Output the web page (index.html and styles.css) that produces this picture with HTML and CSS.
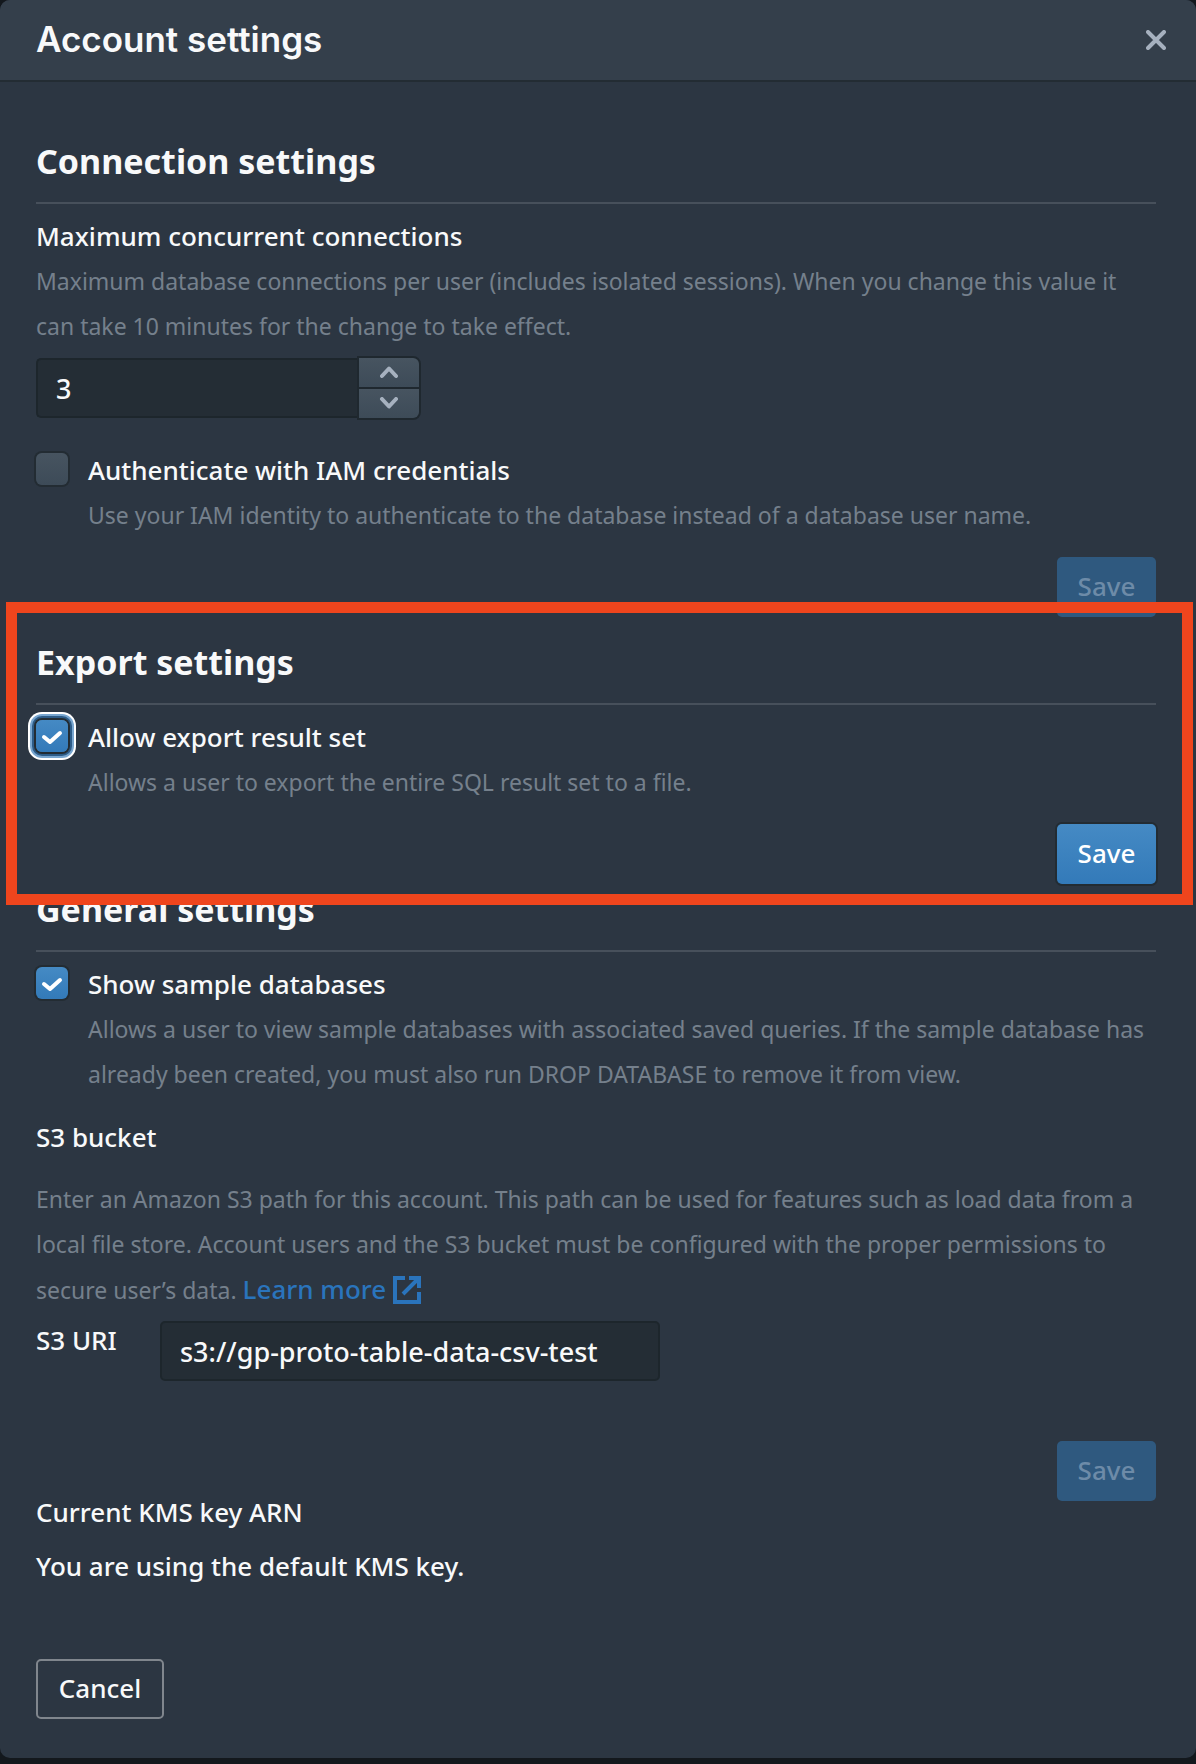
FILE: index.html
```html
<!DOCTYPE html>
<html lang="en">
<head>
<meta charset="utf-8">
<meta name="viewport" content="width=device-width, initial-scale=1">
<title>Account settings</title>
<link rel="stylesheet" href="styles.css">
</head>
<body>
<div class="modal" role="dialog" aria-labelledby="modal-title">
  <header class="modal-header">
    <h1 class="modal-title" id="modal-title">Account settings</h1>
    <button class="close" type="button" aria-label="Close">
      <svg width="20" height="20" viewBox="0 0 20 20" fill="none" stroke="currentColor" stroke-width="4" stroke-linecap="round"><path d="M2 2 18 18M18 2 2 18"/></svg>
    </button>
  </header>
  <main class="modal-body">
    <section class="section">
      <h2 class="section-title">Connection settings</h2>
      <label class="label" for="max-connections">Maximum concurrent connections</label>
      <p class="hint">Maximum database connections per user (includes isolated sessions). When you change this value it can take 10 minutes for the change to take effect.</p>
      <div class="stepper">
        <input class="field stepper-field" id="max-connections" type="number" value="3">
        <div class="stepper-buttons">
          <button class="step" type="button" aria-label="Increase"><svg width="20" height="14" viewBox="0 0 20 14"><path d="M3 10 10 2.500 17 10"/></svg></button>
          <button class="step" type="button" aria-label="Decrease"><svg width="20" height="14" viewBox="0 0 20 14"><path d="M3 2 10 9.500 17 2"/></svg></button>
        </div>
      </div>
      <div class="check-row check-row-spaced">
        <span class="check"><input class="check-box" type="checkbox" id="iam"><svg class="tick" viewBox="0 0 32 32"><path d="M8 17 14 22 24 13"/></svg></span>
        <label class="label" for="iam">Authenticate with IAM credentials</label>
        <p class="hint">Use your IAM identity to authenticate to the database instead of a database user name.</p>
      </div>
      <div class="actions"><button class="button primary" type="button" disabled>Save</button></div>
    </section>

    <section class="section export">
      <h2 class="section-title">Export settings</h2>
      <div class="check-row">
        <span class="check focused"><input class="check-box" type="checkbox" id="export" checked><svg class="tick" viewBox="0 0 32 32"><path d="M8 17 14 22 24 13"/></svg></span>
        <label class="label" for="export">Allow export result set</label>
        <p class="hint">Allows a user to export the entire SQL result set to a file.</p>
      </div>
      <div class="actions"><button class="button primary" type="button">Save</button></div>
    </section>

    <section class="section general">
      <h2 class="section-title">General settings</h2>
      <div class="check-row">
        <span class="check"><input class="check-box" type="checkbox" id="samples" checked><svg class="tick" viewBox="0 0 32 32"><path d="M8 17 14 22 24 13"/></svg></span>
        <label class="label" for="samples">Show sample databases</label>
        <p class="hint">Allows a user to view sample databases with associated saved queries. If the sample database has already been created, you must also run DROP DATABASE to remove it from view.</p>
      </div>
      <h3 class="label bucket-title">S3 bucket</h3>
      <p class="hint">Enter an Amazon S3 path for this account. This path can be used for features such as load data from a local file store. Account users and the S3 bucket must be configured with the proper permissions to secure user’s data. <a class="link" href="#">Learn more <svg class="external" width="28" height="28" viewBox="0 0 28 28" fill="none" stroke="currentColor" stroke-width="4"><path d="M12 2H2V26H26V16M16 2H26V12M25 3 10 18"/></svg></a></p>
      <div class="uri-row">
        <label class="label" for="uri">S3 URI</label>
        <input class="field uri-field" id="uri" type="text" value="s3://gp-proto-table-data-csv-test">
      </div>
      <div class="actions actions-spaced"><button class="button primary" type="button" disabled>Save</button></div>
    </section>

    <section class="section kms">
      <h3 class="label">Current KMS key ARN</h3>
      <p class="label">You are using the default KMS key.</p>
    </section>
    <footer class="modal-footer"><button class="button outline" type="button">Cancel</button></footer>
  </main>
</div>
</body>
</html>
```
FILE: styles.css
```css
* { box-sizing: border-box; }

body {
  margin: 0;
  padding-bottom: 5px;
  background: #13181d;
  color: #f8f9fa;
  font: 500 26px/45px "Noto Sans", "Open Sans", sans-serif;
}

h1, h2, h3, p { margin: 0; }

button, input { font: inherit; color: inherit; margin: 0; }

.modal {
  overflow: hidden;
  border-radius: 10px;
  background: #2c3642;
}

.modal-header {
  display: flex;
  align-items: center;
  justify-content: space-between;
  padding: 18px 30px 18px 36px;
  border-bottom: 2px solid #232c33;
  background: #343f4b;
}

.modal-title { margin-bottom: 2px; font: 600 35px/42px Inter, sans-serif; }

.close {
  display: flex;
  padding: 0;
  border: 0;
  background: none;
  color: #a6b1bf;
}

.modal-body { padding: 57px 40px 39px 36px; }

.section { display: flex; flex-direction: column; }

.section-title {
  margin-bottom: 10px;
  padding-bottom: 19px;
  border-bottom: 2px solid #47505b;
  font-size: 34px;
  font-weight: 700;
  line-height: 44px;
}

.label { font-size: 26px; font-weight: 500; line-height: 45px; }

.hint { color: #75808c; font-size: 23px; font-weight: 400; }

.field {
  height: 60px;
  padding: 0 18px;
  border: 2px solid #1d262c;
  border-radius: 5px;
  background: #242d35;
  font-size: 27px;
  font-weight: 500;
  outline: 0;
}

.stepper { display: flex; align-items: center; margin-top: 7px; }

.stepper-field {
  width: 321px;
  border-right: 0;
  border-radius: 5px 0 0 5px;
  appearance: textfield;
}

.stepper-field::-webkit-inner-spin-button { appearance: none; margin: 0; }

.stepper-buttons {
  display: grid;
  grid-template-rows: 1fr 1fr;
  gap: 2px;
  width: 64px;
  height: 64px;
  border: 2px solid #1f282f;
  border-radius: 0 8px 8px 0;
  overflow: hidden;
  background: #1f282f;
}

.step {
  display: grid;
  place-items: center;
  padding: 0;
  border: 0;
  background: linear-gradient(#475460, #3d4b58);
}

.step svg {
  fill: none;
  stroke: #a6b1bf;
  stroke-width: 4;
  stroke-linecap: round;
  stroke-linejoin: round;
}

.check-row {
  display: grid;
  grid-template-columns: 32px 1fr;
  column-gap: 20px;
}

.check-row-spaced { margin-top: 28px; }

.check-row .hint { grid-column: 2; }

.check {
  display: grid;
  width: 32px;
  height: 32px;
  margin-top: 5px;
  border-radius: 6px;
  box-shadow: 0 0 0 2px #232c33;
}

.check.focused {
  box-shadow: 0 0 0 2px #232c33, 0 0 0 4px #2d5c88, 0 0 0 6px #78a6d0, 0 0 0 8px #ffffff;
}

.check-box, .tick { grid-area: 1 / 1; width: 32px; height: 32px; }

.check-box {
  appearance: none;
  border-radius: 6px;
  background: linear-gradient(#475460, #3d4b58);
}

.check-box:checked { background: linear-gradient(#458ac4, #337ab9); }

.tick {
  visibility: hidden;
  fill: none;
  stroke: #ffffff;
  stroke-width: 4;
  stroke-linecap: round;
  stroke-linejoin: round;
  pointer-events: none;
}

.check-box:checked + .tick { visibility: visible; }

.actions { display: flex; justify-content: flex-end; margin-top: 19px; }

.actions-spaced { margin-top: 60px; }

.button {
  height: 60px;
  padding: 0 18px 2px;
  border: 0;
  border-radius: 5px;
  font-weight: 500;
}

.primary {
  min-width: 99px;
  background: linear-gradient(#458ac4, #337ab9);
  box-shadow: 0 0 0 2px #232c33;
  color: #ffffff;
}

.primary:disabled {
  background: #2f597f;
  box-shadow: none;
  color: #6d8ba8;
}

.outline {
  min-width: 128px;
  border: 2px solid #80868d;
  background: none;
}

/* Highlight frame drawn over the export section */
.export { position: relative; margin-top: 23px; }

.export::after {
  content: "";
  position: absolute;
  inset: -38px -37px -21px -30px;
  border: 11px solid #ef451d;
  pointer-events: none;
}

.general { margin-top: 3px; }

.bucket-title { margin: 18px 0 17px; }

.link { color: #2a74bc; font-size: 26px; font-weight: 500; line-height: 44px; text-decoration: none; }

.external { vertical-align: -5px; }

.uri-row { display: flex; gap: 40px; margin-top: 8px; }

.uri-row .label { min-width: 84px; margin-top: -3px; }

.uri-field { width: 500px; }

.kms { gap: 9px; margin-top: -11px; }

.modal-footer { margin-top: 70px; }
```
